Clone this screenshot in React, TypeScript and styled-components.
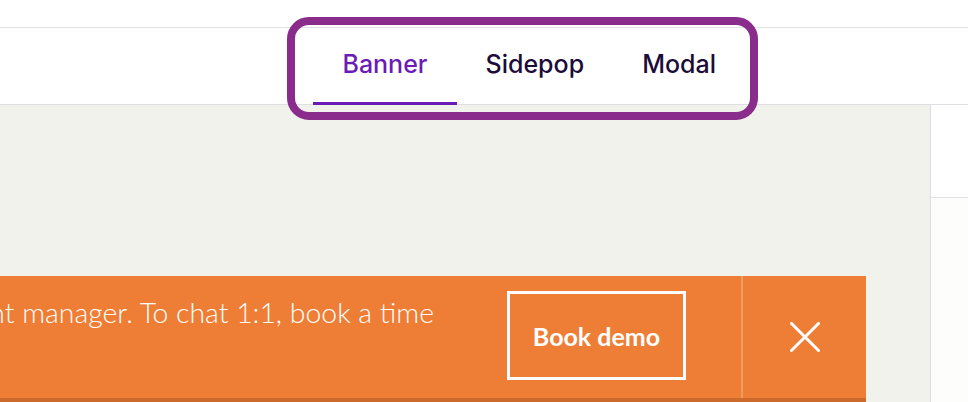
import { ReactElement } from 'react';
import styled, { createGlobalStyle } from 'styled-components';

const GlobalStyle = createGlobalStyle`
  body {
    margin: 0;
    font-family: Inter, "Noto Sans", sans-serif;
    background: #ffffff;
  }
`;

const ScPage = styled.div`
  position: relative;
  width: 968px;
  height: 402px;
  overflow: hidden;
  display: flex;
  flex-direction: column;
`;
const ScTopStrip = styled.div`
  height: 27px;
  flex: none;
  border-bottom: 1px solid #e2e2e5;
`;
const ScTabBar = styled.nav`
  height: 76px;
  flex: none;
  display: flex;
  justify-content: flex-end;
  padding-right: 223px;
  border-bottom: 1px solid #dedee3;
`;
const ScTab = styled.button<{ $active?: boolean }>`
  height: 77px;
  margin-bottom: -1px;
  padding: 0 29px 5px;
  border: 0;
  background: none;
  font-family: Inter, sans-serif;
  font-size: 25px;
  font-weight: 450;
  color: ${(p) => (p.$active ? '#6b1cb4' : '#1d0c39')};
  box-shadow: ${(p) => (p.$active ? 'inset 0 -3px 0 #6b1cb4' : 'none')};
  cursor: pointer;
`;
const ScBody = styled.div`
  flex: 1;
  display: flex;
`;
const ScCanvas = styled.div`
  flex: 1;
  min-width: 0;
  background: #f2f2ed;
  border-right: 1px solid #dcdce1;
  padding: 171px 64px 0 0;
`;
const ScBanner = styled.div`
  height: 122px;
  display: flex;
  background: #ee7e35;
  border-bottom: 6px solid #cc6a2c;
  color: #ffffff;
`;
const ScMessage = styled.div`
  flex: 1;
  min-width: 0;
  overflow: hidden;
  display: flex;
  justify-content: flex-end;
  padding: 19px 73px 0 0;
  font-family: Lato, "Open Sans", sans-serif;
  font-weight: 300;
  font-size: 28.4px;
  line-height: 1.2;
  white-space: nowrap;
`;
const ScDemoButton = styled.button`
  align-self: center;
  margin: 0 55px 3px 0;
  width: 179px;
  height: 89px;
  border: 3px solid #ffffff;
  background: transparent;
  color: #ffffff;
  font-family: Lato, "Open Sans", sans-serif;
  font-weight: 700;
  font-size: 25px;
  cursor: pointer;
`;
const ScDivider = styled.div`
  width: 2px;
  background: #f29b5f;
`;
const ScClose = styled.button`
  width: 123px;
  border: 0;
  background: none;
  display: flex;
  align-items: center;
  justify-content: center;
  cursor: pointer;
`;
const ScSide = styled.aside`
  width: 37px;
  display: flex;
  flex-direction: column;
  background: #fdfdfb;
`;
const ScSideTop = styled.div`
  height: 92px;
  background: #ffffff;
  border-bottom: 1px solid #e0e0e4;
`;
const ScHighlight = styled.div`
  position: absolute;
  left: 287px;
  top: 17px;
  width: 471px;
  height: 103px;
  box-sizing: border-box;
  border: 8px solid #892c8b;
  border-radius: 22px;
  pointer-events: none;
`;

const tabs = ['Banner', 'Sidepop', 'Modal'];

export default function App(): ReactElement {
  return <ScPage>
    <GlobalStyle />
    <ScTopStrip />
    <ScTabBar>
      {tabs.map((t) => <ScTab key={t} $active={t === 'Banner'}>{t}</ScTab>)}
    </ScTabBar>
    <ScBody>
      <ScCanvas>
        <ScBanner>
          <ScMessage>
            <span>Got questions? Reach out to your dedicated account manager. To chat 1:1, book a time</span>
          </ScMessage>
          <ScDemoButton>Book demo</ScDemoButton>
          <ScDivider />
          <ScClose aria-label="Close">
            <svg width="30" height="30" viewBox="0 0 30 30" fill="none" stroke="#ffffff" strokeWidth="3" strokeLinecap="round">
              <path d="M1.5 1.5 L28.5 28.5 M28.5 1.5 L1.5 28.5" />
            </svg>
          </ScClose>
        </ScBanner>
      </ScCanvas>
      <ScSide>
        <ScSideTop />
      </ScSide>
    </ScBody>
    <ScHighlight />
  </ScPage>;
}
